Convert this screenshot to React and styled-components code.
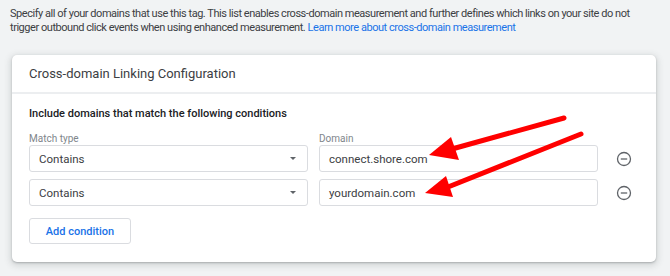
import styled, { createGlobalStyle } from "styled-components";

const GlobalStyle = createGlobalStyle`
  body {
    margin: 0;
    background: #f1f3f4;
    font-family: Roboto, "Liberation Sans", Arial, sans-serif;
    color: #3c4043;
  }
`;

const Page = styled.div`
  position: relative;
  width: 670px;
  height: 276px;
  padding: 7px 14px 0 10px;
  box-sizing: border-box;
  overflow: hidden;
`;

const Intro = styled.p`
  margin: 0;
  font-size: 11px;
  line-height: 14px;
  letter-spacing: -0.46px;
  color: #3c4043;
`;

const Link = styled.a`
  color: #1a73e8;
  text-decoration: none;
`;

const Card = styled.div`
  margin: 20px 0 0 2px;
  width: 644px;
  background: #fff;
  border-radius: 5px;
  box-shadow: 0 1px 2px rgba(60, 64, 67, 0.3), 0 2px 6px 2px rgba(60, 64, 67, 0.15);
`;

const CardHeader = styled.div`
  height: 37px;
  display: flex;
  align-items: center;
  padding: 0 17px;
  font-size: 13px;
  color: #3c4043;
  border-bottom: 2px solid #eceef0;
`;

const CardBody = styled.div`
  padding: 13px 17px 18px;
`;

const Heading = styled.div`
  font-size: 11px;
  font-weight: 500;
  color: #202124;
  margin-bottom: 13px;
`;

const Grid = styled.div`
  display: grid;
  grid-template-columns: 279px 279px 40px;
  column-gap: 11px;
  row-gap: 7px;
  align-items: center;
`;

const Label = styled.div`
  font-size: 10px;
  color: #80868b;
  margin-bottom: -6px;
`;

const Field = styled.div`
  height: 27px;
  box-sizing: border-box;
  border: 1px solid #dadce0;
  border-radius: 3px;
  display: flex;
  align-items: center;
  justify-content: space-between;
  padding: 0 11px 0 9px;
  font-size: 11.5px;
  color: #3c4043;
`;

const Caret = styled.span`
  width: 0;
  height: 0;
  border-left: 3.5px solid transparent;
  border-right: 3.5px solid transparent;
  border-top: 3.5px solid #5f6368;
`;

const RemoveButton = styled.span`
  display: flex;
  align-items: center;
  padding-left: 7px;
`;

const AddButton = styled.button`
  margin-top: 12px;
  width: 102px;
  height: 26px;
  border: 1px solid #dadce0;
  border-radius: 3px;
  background: #fff;
  color: #1a73e8;
  font-family: inherit;
  font-size: 11px;
  font-weight: 500;
  padding: 0;
  cursor: pointer;
`;

const Overlay = styled.svg`
  position: absolute;
  left: 0;
  top: 0;
  pointer-events: none;
`;

const rows = [
  { type: "Contains", domain: "connect.shore.com" },
  { type: "Contains", domain: "yourdomain.com" },
];

const MinusCircle = () => (
  <svg width="16" height="16" viewBox="0 0 16 16">
    <circle cx="8" cy="8" r="6.5" fill="none" stroke="#5f6368" strokeWidth="1.3" />
    <line x1="4.8" y1="8" x2="11.2" y2="8" stroke="#5f6368" strokeWidth="1.3" />
  </svg>
);

const Arrows = () => (
  <Overlay width="670" height="276" viewBox="0 0 670 276">
    <line x1="564" y1="118" x2="452" y2="149" stroke="#ff0000" strokeWidth="5" strokeLinecap="round" />
    <polygon points="429,155 451,137 459,160" fill="#ff0000" />
    <line x1="581" y1="134" x2="448" y2="187" stroke="#ff0000" strokeWidth="5" strokeLinecap="round" />
    <polygon points="425,193 446,176 453,197" fill="#ff0000" />
  </Overlay>
);

export default function App() {
  return (
    <Page>
      <GlobalStyle />
      <Intro>
        Specify all of your domains that use this tag. This list enables cross-domain measurement and further
        defines which links on your site do not trigger outbound click events when using enhanced measurement.{" "}
        <Link href="#">Learn more about cross-domain measurement</Link>
      </Intro>
      <Card>
        <CardHeader>Cross-domain Linking Configuration</CardHeader>
        <CardBody>
          <Heading>Include domains that match the following conditions</Heading>
          <Grid>
            <Label>Match type</Label>
            <Label>Domain</Label>
            <span />
            {rows.map((row, i) => [
              <Field key={`t${i}`}>
                {row.type}
                <Caret />
              </Field>,
              <Field key={`d${i}`}>{row.domain}</Field>,
              <RemoveButton key={`r${i}`}>
                <MinusCircle />
              </RemoveButton>,
            ])}
          </Grid>
          <AddButton>Add condition</AddButton>
        </CardBody>
      </Card>
      <Arrows />
    </Page>
  );
}
